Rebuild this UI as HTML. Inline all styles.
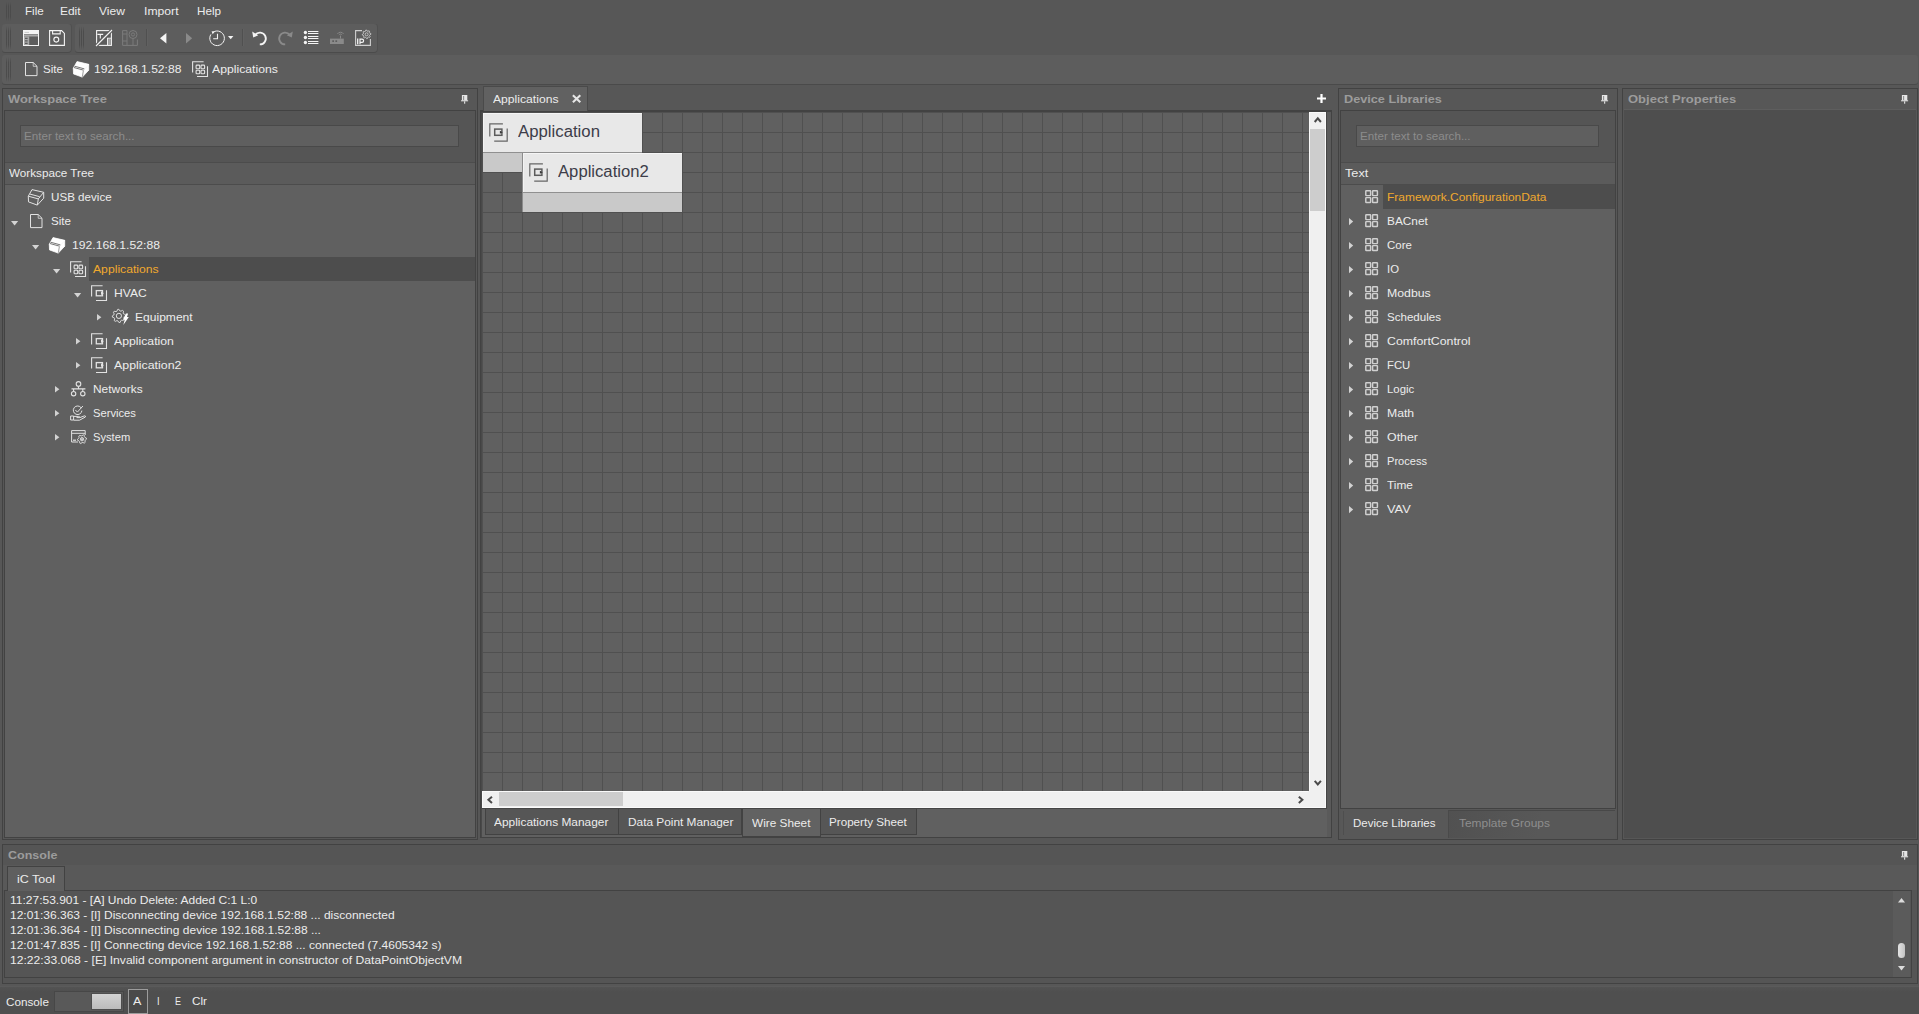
<!DOCTYPE html>
<html>
<head>
<meta charset="utf-8">
<title>iC Tool</title>
<style>
*{box-sizing:border-box;margin:0;padding:0}
html,body{width:1919px;height:1014px;overflow:hidden;background:#575757}
body{font-family:"Liberation Sans",sans-serif;font-size:11px;color:#ececec;position:relative}
.a{position:absolute}
.t{position:absolute;white-space:nowrap;line-height:14px;height:14px;transform-origin:0 50%;display:block}
svg{position:absolute;overflow:visible}
</style>
</head>
<body>
<div class="a" style="left:6px;top:2px;width:1px;height:19px;background:linear-gradient(to bottom,rgba(74,74,74,0),rgba(74,74,74,0.9) 22%,rgba(74,74,74,0.9) 78%,rgba(74,74,74,0))"></div><div class="a" style="left:8px;top:2px;width:1px;height:19px;background:linear-gradient(to bottom,rgba(74,74,74,0),rgba(74,74,74,0.9) 22%,rgba(74,74,74,0.9) 78%,rgba(74,74,74,0))"></div><div class="a" style="left:10px;top:2px;width:1px;height:19px;background:linear-gradient(to bottom,rgba(74,74,74,0),rgba(74,74,74,0.9) 22%,rgba(74,74,74,0.9) 78%,rgba(74,74,74,0))"></div>
<span class="t" style="left:24.80px;top:4.12px;font-size:11.2px;transform:scaleX(1.0362)">File</span>
<span class="t" style="left:60.00px;top:4.12px;font-size:11.2px;transform:scaleX(1.0674)">Edit</span>
<span class="t" style="left:99.10px;top:4.12px;font-size:11.2px;transform:scaleX(1.0759)">View</span>
<span class="t" style="left:143.50px;top:4.12px;font-size:11.2px;transform:scaleX(1.0901)">Import</span>
<span class="t" style="left:196.50px;top:4.12px;font-size:11.2px;transform:scaleX(1.0463)">Help</span>
<div class="a" style="left:2px;top:24px;width:69px;height:28px;background:#5d5d5d;border-radius:3px;box-shadow:0 1px 0 #4b4b4b, 1px 0 0 #505050"></div>
<div class="a" style="left:6px;top:26px;width:1px;height:24px;background:linear-gradient(to bottom,rgba(74,74,74,0),rgba(74,74,74,0.9) 22%,rgba(74,74,74,0.9) 78%,rgba(74,74,74,0))"></div><div class="a" style="left:8px;top:26px;width:1px;height:24px;background:linear-gradient(to bottom,rgba(74,74,74,0),rgba(74,74,74,0.9) 22%,rgba(74,74,74,0.9) 78%,rgba(74,74,74,0))"></div><div class="a" style="left:10px;top:26px;width:1px;height:24px;background:linear-gradient(to bottom,rgba(74,74,74,0),rgba(74,74,74,0.9) 22%,rgba(74,74,74,0.9) 78%,rgba(74,74,74,0))"></div>
<div class="a" style="left:75px;top:24px;width:302px;height:28px;background:#5d5d5d;border-radius:3px;box-shadow:0 1px 0 #4b4b4b, 1px 0 0 #505050"></div>
<div class="a" style="left:79px;top:26px;width:1px;height:24px;background:linear-gradient(to bottom,rgba(74,74,74,0),rgba(74,74,74,0.9) 22%,rgba(74,74,74,0.9) 78%,rgba(74,74,74,0))"></div><div class="a" style="left:81px;top:26px;width:1px;height:24px;background:linear-gradient(to bottom,rgba(74,74,74,0),rgba(74,74,74,0.9) 22%,rgba(74,74,74,0.9) 78%,rgba(74,74,74,0))"></div><div class="a" style="left:83px;top:26px;width:1px;height:24px;background:linear-gradient(to bottom,rgba(74,74,74,0),rgba(74,74,74,0.9) 22%,rgba(74,74,74,0.9) 78%,rgba(74,74,74,0))"></div>
<svg style="left:23px;top:30px" width="16" height="16" viewBox="0 0 16 16"><rect x="0.5" y="0.5" width="15" height="15" fill="none" stroke="#f4f4f4" stroke-width="1"/><rect x="0.5" y="0.5" width="15" height="3.8" fill="#f4f4f4"/><path d="M1.5 2.4 H6" stroke="#c9c9c9" stroke-width="1"/><path d="M1 5.8 H15" stroke="#bdbdbd" stroke-width="1.2"/><rect x="1" y="6.4" width="5.2" height="8.6" fill="#a9a9a9"/><path d="M2 8.3 H4.6 M2 10.8 H4.6 M2 13.3 H4.6" stroke="#5a5a5a" stroke-width="1.3"/></svg>
<svg style="left:49px;top:30px" width="16" height="16" viewBox="0 0 16 16"><path d="M0.6 0.6 H12.6 L15.4 3.4 V15.4 H0.6 Z" fill="none" stroke="#f4f4f4" stroke-width="1.1"/><path d="M3.6 0.8 V3.9 H11.2 V0.8" fill="none" stroke="#f4f4f4" stroke-width="1.1"/><circle cx="7.3" cy="9.6" r="2.45" fill="none" stroke="#f4f4f4" stroke-width="1.15"/></svg>
<svg style="left:96px;top:30px" width="16" height="16" viewBox="0 0 16 16"><rect x="0.6" y="0.6" width="14.8" height="14.8" fill="none" stroke="#f4f4f4" stroke-width="1.1"/><path d="M0 16 L16 0" stroke="#5d5d5d" stroke-width="3.4"/><path d="M0 16 L16 0" stroke="#f4f4f4" stroke-width="1.1"/><path d="M1.4 4.4 H7.2 M4.3 4.4 V8.6" stroke="#f4f4f4" stroke-width="1.1" fill="none"/><path d="M11.6 15 V8.2 H15" stroke="#f4f4f4" stroke-width="1.1" fill="none"/><rect x="12.2" y="8.8" width="2.6" height="6.2" fill="#a5a5a5"/></svg>
<svg style="left:122px;top:30px" width="16" height="16" viewBox="0 0 16 16"><g fill="none" stroke="#7b7b7b" stroke-width="1"><path d="M0.6 0.6 H5 V15.4 H0.6 Z"/><path d="M0.6 4 H5 M0.6 11 H5"/><circle cx="11" cy="4.5" r="4"/><circle cx="11" cy="4.5" r="1.6"/><path d="M5 15.4 H15.4 V9.5 M11 8.5 V15.4"/></g></svg>
<div class="a" style="left:146px;top:29px;width:1px;height:17px;background:#505050"></div>
<div class="a" style="left:147px;top:29px;width:1px;height:17px;background:#616161"></div>
<div class="a" style="left:242px;top:29px;width:1px;height:17px;background:#505050"></div>
<div class="a" style="left:243px;top:29px;width:1px;height:17px;background:#616161"></div>
<svg style="left:160px;top:33px" width="7" height="11" viewBox="0 0 7 11"><path d="M6.4 0 V10.4 L0 5.2 Z" fill="#f4f4f4"/></svg>
<svg style="left:186px;top:33px" width="7" height="11" viewBox="0 0 7 11"><path d="M0 0 V10.4 L6.2 5.2 Z" fill="#8a8a8a"/></svg>
<svg style="left:209px;top:30px" width="16" height="17" viewBox="0 0 16 17"><path d="M4.2 2.1 A7.3 7.3 0 1 1 1.9 4.4" fill="none" stroke="#f4f4f4" stroke-width="1"/><path d="M2.6 1.2 L6 1.6 L3.6 4.2 Z" fill="#f4f4f4"/><path d="M8.5 3.8 V8.7 H4.2" fill="none" stroke="#f4f4f4" stroke-width="1.1"/></svg>
<svg style="left:228px;top:36px" width="6" height="4" viewBox="0 0 6 4"><path d="M0 0 H5.4 L2.7 3.2 Z" fill="#f4f4f4"/></svg>
<svg style="left:251.5px;top:31px" width="15" height="15" viewBox="0 0 15 15"><path d="M3.2 3.9 A5.9 5.9 0 1 1 7.8 13.4" fill="none" stroke="#f4f4f4" stroke-width="1.9"/><path d="M0.2 0.6 L1.2 6.6 L6.2 4.2 Z" fill="#f4f4f4"/></svg>
<svg style="left:277.5px;top:31px;transform:scaleX(-1)" width="15" height="15" viewBox="0 0 15 15"><path d="M3.2 3.9 A5.9 5.9 0 1 1 7.8 13.4" fill="none" stroke="#8a8a8a" stroke-width="1.9"/><path d="M0.2 0.6 L1.2 6.6 L6.2 4.2 Z" fill="#8a8a8a"/></svg>
<svg style="left:0px;top:0px" width="400" height="60" viewBox="0 0 400 60"><circle cx="305.4" cy="32.5" r="1.65" fill="#f4f4f4"/><rect x="308" y="31" width="10.4" height="1" fill="#f4f4f4"/><rect x="308" y="33" width="10.4" height="1" fill="#f4f4f4"/><circle cx="305.4" cy="37.5" r="1.65" fill="#f4f4f4"/><rect x="308" y="36" width="10.4" height="1" fill="#f4f4f4"/><rect x="308" y="38" width="10.4" height="1" fill="#f4f4f4"/><circle cx="305.4" cy="42.5" r="1.65" fill="#f4f4f4"/><rect x="308" y="41" width="10.4" height="1" fill="#f4f4f4"/><rect x="308" y="43" width="10.4" height="1" fill="#f4f4f4"/></svg>
<svg style="left:330px;top:31px" width="14" height="14" viewBox="0 0 14 14"><rect x="0" y="7.6" width="13.8" height="5.4" fill="#8a8a8a"/><rect x="2.3" y="9.3" width="1.7" height="1.7" fill="#5d5d5d"/><rect x="5.4" y="9.3" width="1.7" height="1.7" fill="#5d5d5d"/><path d="M10.5 7.6 V4.6" stroke="#8a8a8a" stroke-width="1"/><path d="M7.4 3 A3.6 3.6 0 0 1 13.6 3" fill="none" stroke="#8a8a8a" stroke-width="0.9"/><path d="M8.9 4 A1.9 1.9 0 0 1 12.1 4" fill="none" stroke="#8a8a8a" stroke-width="0.9"/></svg>
<svg style="left:355px;top:30px" width="16" height="16" viewBox="0 0 16 16"><path d="M7 0.6 H0.6 V15.4 H15.4 V9" fill="none" stroke="#cfcfcf" stroke-width="1.1"/><path d="M15.82 3.46 L15.90 4.30 L14.74 4.92 L14.56 5.52 L15.18 6.69 L14.64 7.34 L13.38 6.96 L12.82 7.26 L12.44 8.52 L11.60 8.60 L10.98 7.44 L10.38 7.26 L9.21 7.88 L8.56 7.34 L8.94 6.08 L8.64 5.52 L7.38 5.14 L7.30 4.30 L8.46 3.68 L8.64 3.08 L8.02 1.91 L8.56 1.26 L9.82 1.64 L10.38 1.34 L10.76 0.08 L11.60 0.00 L12.22 1.16 L12.82 1.34 L13.99 0.72 L14.64 1.26 L14.26 2.52 L14.56 3.08 Z" fill="none" stroke="#d6d6d6" stroke-width="0.8"/><circle cx="11.6" cy="4.3" r="1.5" fill="none" stroke="#d6d6d6" stroke-width="0.8"/><path d="M2.7 8.6 V14.3" stroke="#f4f4f4" stroke-width="1.3"/><path d="M5 14.3 V9.1 H7 A1.6 1.6 0 0 1 7 12.3 H5" fill="none" stroke="#f4f4f4" stroke-width="1.2"/></svg>
<div class="a" style="left:2px;top:55px;width:1916px;height:29px;background:#5d5d5d;border-radius:3px;box-shadow:0 1px 0 #4a4a4a"></div>
<div class="a" style="left:6px;top:57px;width:1px;height:25px;background:linear-gradient(to bottom,rgba(74,74,74,0),rgba(74,74,74,0.9) 22%,rgba(74,74,74,0.9) 78%,rgba(74,74,74,0))"></div><div class="a" style="left:8px;top:57px;width:1px;height:25px;background:linear-gradient(to bottom,rgba(74,74,74,0),rgba(74,74,74,0.9) 22%,rgba(74,74,74,0.9) 78%,rgba(74,74,74,0))"></div><div class="a" style="left:10px;top:57px;width:1px;height:25px;background:linear-gradient(to bottom,rgba(74,74,74,0),rgba(74,74,74,0.9) 22%,rgba(74,74,74,0.9) 78%,rgba(74,74,74,0))"></div>
<svg style="left:25px;top:62px" width="13" height="15" viewBox="0 0 13 15"><path d="M0.5 0.5 H8.2 L12 4.3 V13.6 H0.5 Z" fill="none" stroke="#e2e2e2" stroke-width="1"/><path d="M8.2 0.5 V4.3 H12" fill="none" stroke="#e2e2e2" stroke-width="1" opacity="0.75"/></svg>
<span class="t" style="left:43.10px;top:62.12px;font-size:11.2px;transform:scaleX(1.0363)">Site</span>
<svg style="left:73px;top:61px" width="16" height="16" viewBox="0 0 16 16"><g fill="#ffffff" stroke="#ffffff" stroke-width="0.8" stroke-linejoin="round"><path d="M4 0.6 L15.7 3.3 L10.3 9.9 L0.3 7.2 Z"/><path d="M0.3 7.2 L0.5 12.9 L9.3 16.1 L10.3 9.9 Z"/><path d="M10.3 9.9 L9.3 16.1 L15.7 9.2 L15.7 3.3 Z"/></g><g fill="none" stroke="#5d5d5d" stroke-width="0.85"><path d="M1.5 5.2 L11.4 7.9"/><path d="M0.9 6.5 L10.7 9.2"/><path d="M10.3 9.9 L9.4 15.8" stroke-width="0.6"/></g></svg>
<span class="t" style="left:93.75px;top:62.12px;font-size:11.2px;transform:scaleX(1.0807)">192.168.1.52:88</span>
<svg style="left:192px;top:61px" width="16" height="16" viewBox="0 0 16 16"><path d="M11.6 0.7 H0.6 V11.6" fill="none" stroke="#e2e2e2" stroke-width="1.1"/><path d="M15.5 5.2 V15.5 H5" fill="none" stroke="#e2e2e2" stroke-width="1.1"/><rect x="4.1" y="4.1" width="3.6" height="3.6" rx="0.8" fill="none" stroke="#e2e2e2" stroke-width="1.1"/><rect x="9.0" y="4.1" width="3.6" height="3.6" rx="0.8" fill="none" stroke="#e2e2e2" stroke-width="1.1"/><rect x="4.1" y="9.2" width="3.6" height="3.6" rx="0.8" fill="none" stroke="#e2e2e2" stroke-width="1.1"/><rect x="9.0" y="9.2" width="3.6" height="3.6" rx="0.8" fill="none" stroke="#e2e2e2" stroke-width="1.1"/></svg>
<span class="t" style="left:212.10px;top:62.12px;font-size:11.2px;transform:scaleX(1.0929)">Applications</span>
<div class="a" style="left:2px;top:88px;width:476px;height:752px;background:#575757;border:1px solid #424242"></div><span class="t" style="left:8.30px;top:91.85px;font-size:11.4px;transform:scaleX(1.1348);font-weight:bold;color:#9c9c9c">Workspace Tree</span><svg style="left:461px;top:94.5px" width="8" height="10" viewBox="0 0 8 10"><rect x="0.9" y="0" width="5.4" height="5.6" fill="#e6e6e6"/><rect x="2.4" y="1" width="0.7" height="4.6" fill="#5a5a5a"/><rect x="0" y="5.3" width="7.1" height="1.0" fill="#e6e6e6"/><rect x="3.1" y="6.3" width="1.1" height="2.4" fill="#e6e6e6"/></svg><div class="a" style="left:4px;top:110px;width:472px;height:728px;background:#555555;border:1px solid #424242"></div><div class="a" style="left:20px;top:125px;width:439px;height:22px;background:#5f5f5f;border:1px solid #494949"></div><span class="t" style="left:24.40px;top:129.12px;font-size:11.2px;transform:scaleX(1.0399);color:#8c8c8c">Enter text to search...</span><div class="a" style="left:5px;top:162px;width:470px;height:23px;background:#5b5b5b;border-top:1px solid #4c4c4c;border-bottom:1px solid #4c4c4c"></div><span class="t" style="left:9.20px;top:166.12px;font-size:11.2px;transform:scaleX(1.0450)">Workspace Tree</span><div class="a" style="left:5px;top:185px;width:470px;height:652px;background:#606060"></div>
<svg style="left:28px;top:189px" width="16" height="16" viewBox="0 0 16 16"><g fill="none" stroke="#e2e2e2" stroke-width="1" stroke-linejoin="round"><path d="M4 0.6 L15.7 3.3 L10.3 9.9 L0.3 7.2 Z"/><path d="M0.3 7.2 L0.5 12.9 L9.3 16.1 L10.3 9.9"/><path d="M9.3 16.1 L15.7 9.2 L15.7 3.3"/><path d="M1.7 5.0 L11.6 7.7"/></g></svg><span class="t" style="left:51.25px;top:190.12px;font-size:11.2px;transform:scaleX(1.0382)">USB device</span>
<svg style="left:10.8px;top:220.6px" width="8" height="5" viewBox="0 0 8 5"><path d="M0 0 H7.2 L3.6 4.6 Z" fill="#d4d4d4"/></svg><svg style="left:30px;top:214px" width="13" height="15" viewBox="0 0 13 15"><path d="M0.5 0.5 H8.2 L12 4.3 V13.6 H0.5 Z" fill="none" stroke="#e2e2e2" stroke-width="1"/><path d="M8.2 0.5 V4.3 H12" fill="none" stroke="#e2e2e2" stroke-width="1" opacity="0.75"/></svg><span class="t" style="left:51.25px;top:214.12px;font-size:11.2px;transform:scaleX(1.0363)">Site</span>
<svg style="left:31.8px;top:244.6px" width="8" height="5" viewBox="0 0 8 5"><path d="M0 0 H7.2 L3.6 4.6 Z" fill="#d4d4d4"/></svg><svg style="left:49px;top:237px" width="16" height="16" viewBox="0 0 16 16"><g fill="#ffffff" stroke="#ffffff" stroke-width="0.8" stroke-linejoin="round"><path d="M4 0.6 L15.7 3.3 L10.3 9.9 L0.3 7.2 Z"/><path d="M0.3 7.2 L0.5 12.9 L9.3 16.1 L10.3 9.9 Z"/><path d="M10.3 9.9 L9.3 16.1 L15.7 9.2 L15.7 3.3 Z"/></g><g fill="none" stroke="#606060" stroke-width="0.85"><path d="M1.5 5.2 L11.4 7.9"/><path d="M0.9 6.5 L10.7 9.2"/><path d="M10.3 9.9 L9.4 15.8" stroke-width="0.6"/></g></svg><span class="t" style="left:72.25px;top:238.12px;font-size:11.2px;transform:scaleX(1.0869)">192.168.1.52:88</span>
<div class="a" style="left:89px;top:257px;width:386px;height:24px;background:#4d4d4d"></div><svg style="left:52.8px;top:268.6px" width="8" height="5" viewBox="0 0 8 5"><path d="M0 0 H7.2 L3.6 4.6 Z" fill="#d4d4d4"/></svg><svg style="left:70px;top:261px" width="16" height="16" viewBox="0 0 16 16"><path d="M11.6 0.7 H0.6 V11.6" fill="none" stroke="#e2e2e2" stroke-width="1.1"/><path d="M15.5 5.2 V15.5 H5" fill="none" stroke="#e2e2e2" stroke-width="1.1"/><rect x="4.1" y="4.1" width="3.6" height="3.6" rx="0.8" fill="none" stroke="#e2e2e2" stroke-width="1.1"/><rect x="9.0" y="4.1" width="3.6" height="3.6" rx="0.8" fill="none" stroke="#e2e2e2" stroke-width="1.1"/><rect x="4.1" y="9.2" width="3.6" height="3.6" rx="0.8" fill="none" stroke="#e2e2e2" stroke-width="1.1"/><rect x="9.0" y="9.2" width="3.6" height="3.6" rx="0.8" fill="none" stroke="#e2e2e2" stroke-width="1.1"/></svg><span class="t" style="left:93.25px;top:262.12px;font-size:11.2px;transform:scaleX(1.0887);color:#f0a92d">Applications</span>
<svg style="left:73.8px;top:292.6px" width="8" height="5" viewBox="0 0 8 5"><path d="M0 0 H7.2 L3.6 4.6 Z" fill="#d4d4d4"/></svg><svg style="left:91px;top:285px" width="16" height="16" viewBox="0 0 16 16"><path d="M11.6 0.7 H0.6 V11.6" fill="none" stroke="#e2e2e2" stroke-width="1.1"/><path d="M15.5 5.2 V15.5 H5" fill="none" stroke="#e2e2e2" stroke-width="1.1"/><rect x="5.3" y="5.6" width="6.2" height="5.2" fill="none" stroke="#e2e2e2" stroke-width="1.3"/><path d="M10 6.3 L12.9 8.2 L10 10.1 Z" fill="#e2e2e2"/></svg><span class="t" style="left:114.25px;top:286.12px;font-size:11.2px;transform:scaleX(1.0814)">HVAC</span>
<svg style="left:96.6px;top:313.6px" width="5" height="7" viewBox="0 0 5 7"><path d="M0 0 L4.4 3.3 L0 6.6 Z" fill="#d2d2d2"/></svg><svg style="left:112px;top:309px" width="16" height="16" viewBox="0 0 16 16"><path d="M13.37 5.61 L13.50 6.90 L11.90 7.89 L11.61 8.85 L12.39 10.57 L11.57 11.57 L9.73 11.14 L8.85 11.61 L8.19 13.37 L6.90 13.50 L5.91 11.90 L4.95 11.61 L3.23 12.39 L2.23 11.57 L2.66 9.73 L2.19 8.85 L0.43 8.19 L0.30 6.90 L1.90 5.91 L2.19 4.95 L1.41 3.23 L2.23 2.23 L4.07 2.66 L4.95 2.19 L5.61 0.43 L6.90 0.30 L7.89 1.90 L8.85 2.19 L10.57 1.41 L11.57 2.23 L11.14 4.07 L11.61 4.95 Z" fill="none" stroke="#e2e2e2" stroke-width="0.9" stroke-linejoin="round"/><circle cx="6.9" cy="6.9" r="2.6" fill="none" stroke="#e2e2e2" stroke-width="1"/><path d="M13.9 4.4 L16.1 4.4 L15 8.1 L16.8 8.1 L11.3 16 L12.7 10.8 L10.9 10.8 Z" fill="#ffffff" stroke="#606060" stroke-width="0.9" paint-order="stroke"/></svg><span class="t" style="left:135.25px;top:310.12px;font-size:11.2px;transform:scaleX(1.0785)">Equipment</span>
<svg style="left:75.6px;top:337.6px" width="5" height="7" viewBox="0 0 5 7"><path d="M0 0 L4.4 3.3 L0 6.6 Z" fill="#d2d2d2"/></svg><svg style="left:91px;top:333px" width="16" height="16" viewBox="0 0 16 16"><path d="M11.6 0.7 H0.6 V11.6" fill="none" stroke="#e2e2e2" stroke-width="1.1"/><path d="M15.5 5.2 V15.5 H5" fill="none" stroke="#e2e2e2" stroke-width="1.1"/><rect x="5.3" y="5.6" width="6.2" height="5.2" fill="none" stroke="#e2e2e2" stroke-width="1.3"/><path d="M10 6.3 L12.9 8.2 L10 10.1 Z" fill="#e2e2e2"/></svg><span class="t" style="left:114.25px;top:334.12px;font-size:11.2px;transform:scaleX(1.0951)">Application</span>
<svg style="left:75.6px;top:361.6px" width="5" height="7" viewBox="0 0 5 7"><path d="M0 0 L4.4 3.3 L0 6.6 Z" fill="#d2d2d2"/></svg><svg style="left:91px;top:357px" width="16" height="16" viewBox="0 0 16 16"><path d="M11.6 0.7 H0.6 V11.6" fill="none" stroke="#e2e2e2" stroke-width="1.1"/><path d="M15.5 5.2 V15.5 H5" fill="none" stroke="#e2e2e2" stroke-width="1.1"/><rect x="5.3" y="5.6" width="6.2" height="5.2" fill="none" stroke="#e2e2e2" stroke-width="1.3"/><path d="M10 6.3 L12.9 8.2 L10 10.1 Z" fill="#e2e2e2"/></svg><span class="t" style="left:114.25px;top:358.12px;font-size:11.2px;transform:scaleX(1.1062)">Application2</span>
<svg style="left:54.6px;top:385.6px" width="5" height="7" viewBox="0 0 5 7"><path d="M0 0 L4.4 3.3 L0 6.6 Z" fill="#d2d2d2"/></svg><svg style="left:70.6px;top:381px" width="16" height="16" viewBox="0 0 16 16"><g fill="none" stroke="#e2e2e2" stroke-width="1.1"><circle cx="7.5" cy="2.9" r="2.3"/><path d="M7.5 5.2 V7.9 M0.5 7.9 H14.4 M2.6 7.9 V10.4 M11.8 7.9 V10.4"/><circle cx="2.6" cy="12.7" r="2.2"/><circle cx="11.8" cy="12.7" r="2.2"/></g></svg><span class="t" style="left:93.25px;top:382.12px;font-size:11.2px;transform:scaleX(1.0659)">Networks</span>
<svg style="left:54.6px;top:409.6px" width="5" height="7" viewBox="0 0 5 7"><path d="M0 0 L4.4 3.3 L0 6.6 Z" fill="#d2d2d2"/></svg><svg style="left:70px;top:405px" width="16" height="16" viewBox="0 0 16 16"><g fill="none" stroke="#e2e2e2" stroke-width="1"><path d="M11.2 2.9 A4.3 4.3 0 1 0 11.9 5.6"/><path d="M5.3 4.9 L7.4 7.1 L12.9 1"/><path d="M0.6 11 H3.6 V15 H0.6 Z"/><path d="M3.6 11.4 H8.5 Q10 11.4 9.8 12.6 H6.5 M9.8 12.6 L14.6 10.8 Q15.9 10.8 15.4 12 L9.5 15.2 H3.6"/></g></svg><span class="t" style="left:93.25px;top:406.12px;font-size:11.2px;transform:scaleX(1.0012)">Services</span>
<svg style="left:54.6px;top:433.6px" width="5" height="7" viewBox="0 0 5 7"><path d="M0 0 L4.4 3.3 L0 6.6 Z" fill="#d2d2d2"/></svg><svg style="left:70.7px;top:430.4px" width="16" height="16" viewBox="0 0 16 16"><g fill="none" stroke="#e2e2e2" stroke-width="1"><path d="M7 12 H0.6 V0.6 H14.2 V5"/><path d="M0.6 3.3 H14.2"/><path d="M2 10.2 H5" stroke-width="1.2"/></g><path d="M15.35 8.04 L15.50 9.20 L14.28 10.08 L13.94 10.90 L14.18 12.38 L13.25 13.10 L11.88 12.48 L11.00 12.60 L9.84 13.55 L8.75 13.10 L8.60 11.60 L8.06 10.90 L6.65 10.36 L6.50 9.20 L7.72 8.32 L8.06 7.50 L7.82 6.02 L8.75 5.30 L10.12 5.92 L11.00 5.80 L12.16 4.85 L13.25 5.30 L13.40 6.80 L13.94 7.50 Z" fill="#606060" stroke="#e2e2e2" stroke-width="0.9" stroke-linejoin="round"/><path d="M11 7.4 V11 M9.2 9.2 H12.8" stroke="#e2e2e2" stroke-width="0.9"/><circle cx="11" cy="9.2" r="1.7" fill="none" stroke="#e2e2e2" stroke-width="0.8"/></svg><span class="t" style="left:93.25px;top:430.12px;font-size:11.2px;transform:scaleX(0.9976)">System</span>
<div class="a" style="left:1338px;top:88px;width:280px;height:752px;background:#575757;border:1px solid #424242"></div><span class="t" style="left:1344.30px;top:91.85px;font-size:11.4px;transform:scaleX(1.1126);font-weight:bold;color:#9c9c9c">Device Libraries</span><svg style="left:1601px;top:94.5px" width="8" height="10" viewBox="0 0 8 10"><rect x="0.9" y="0" width="5.4" height="5.6" fill="#e6e6e6"/><rect x="2.4" y="1" width="0.7" height="4.6" fill="#5a5a5a"/><rect x="0" y="5.3" width="7.1" height="1.0" fill="#e6e6e6"/><rect x="3.1" y="6.3" width="1.1" height="2.4" fill="#e6e6e6"/></svg><div class="a" style="left:1340px;top:110px;width:276px;height:699px;background:#555555;border:1px solid #424242"></div><div class="a" style="left:1356px;top:125px;width:243px;height:22px;background:#5f5f5f;border:1px solid #494949"></div><span class="t" style="left:1360.40px;top:129.12px;font-size:11.2px;transform:scaleX(1.0399);color:#8c8c8c">Enter text to search...</span><div class="a" style="left:1341px;top:162px;width:274px;height:23px;background:#5b5b5b;border-top:1px solid #4c4c4c;border-bottom:1px solid #4c4c4c"></div><span class="t" style="left:1345.20px;top:166.12px;font-size:11.2px;transform:scaleX(1.1343)">Text</span><div class="a" style="left:1341px;top:185px;width:274px;height:623px;background:#606060"></div>
<div class="a" style="left:1383px;top:185px;width:232px;height:24px;background:#4d4d4d"></div>
<svg style="left:1364.9px;top:190.3px" width="14" height="14" viewBox="0 0 14 14"><rect x="0.8" y="0.8" width="4.8" height="4.8" rx="0.5" fill="none" stroke="#d0d0d0" stroke-width="1.45"/><rect x="7.6" y="0.8" width="4.8" height="4.8" rx="0.5" fill="none" stroke="#d0d0d0" stroke-width="1.45"/><rect x="0.8" y="7.6" width="4.8" height="4.8" rx="0.5" fill="none" stroke="#d0d0d0" stroke-width="1.45"/><rect x="7.6" y="7.6" width="4.8" height="4.8" rx="0.5" fill="none" stroke="#d0d0d0" stroke-width="1.45"/></svg>
<span class="t" style="left:1387.40px;top:190.12px;font-size:11.2px;transform:scaleX(1.0683);color:#f0a92d">Framework.ConfigurationData</span>
<svg style="left:1349px;top:218.1px" width="5" height="8" viewBox="0 0 5 8"><path d="M0 0 L4.2 3.6 L0 7.2 Z" fill="#d2d2d2"/></svg>
<svg style="left:1364.9px;top:214.3px" width="14" height="14" viewBox="0 0 14 14"><rect x="0.8" y="0.8" width="4.8" height="4.8" rx="0.5" fill="none" stroke="#d0d0d0" stroke-width="1.45"/><rect x="7.6" y="0.8" width="4.8" height="4.8" rx="0.5" fill="none" stroke="#d0d0d0" stroke-width="1.45"/><rect x="0.8" y="7.6" width="4.8" height="4.8" rx="0.5" fill="none" stroke="#d0d0d0" stroke-width="1.45"/><rect x="7.6" y="7.6" width="4.8" height="4.8" rx="0.5" fill="none" stroke="#d0d0d0" stroke-width="1.45"/></svg>
<span class="t" style="left:1387.40px;top:214.12px;font-size:11.2px;transform:scaleX(1.0570)">BACnet</span>
<svg style="left:1349px;top:242.1px" width="5" height="8" viewBox="0 0 5 8"><path d="M0 0 L4.2 3.6 L0 7.2 Z" fill="#d2d2d2"/></svg>
<svg style="left:1364.9px;top:238.3px" width="14" height="14" viewBox="0 0 14 14"><rect x="0.8" y="0.8" width="4.8" height="4.8" rx="0.5" fill="none" stroke="#d0d0d0" stroke-width="1.45"/><rect x="7.6" y="0.8" width="4.8" height="4.8" rx="0.5" fill="none" stroke="#d0d0d0" stroke-width="1.45"/><rect x="0.8" y="7.6" width="4.8" height="4.8" rx="0.5" fill="none" stroke="#d0d0d0" stroke-width="1.45"/><rect x="7.6" y="7.6" width="4.8" height="4.8" rx="0.5" fill="none" stroke="#d0d0d0" stroke-width="1.45"/></svg>
<span class="t" style="left:1387.40px;top:238.12px;font-size:11.2px;transform:scaleX(1.0257)">Core</span>
<svg style="left:1349px;top:266.1px" width="5" height="8" viewBox="0 0 5 8"><path d="M0 0 L4.2 3.6 L0 7.2 Z" fill="#d2d2d2"/></svg>
<svg style="left:1364.9px;top:262.3px" width="14" height="14" viewBox="0 0 14 14"><rect x="0.8" y="0.8" width="4.8" height="4.8" rx="0.5" fill="none" stroke="#d0d0d0" stroke-width="1.45"/><rect x="7.6" y="0.8" width="4.8" height="4.8" rx="0.5" fill="none" stroke="#d0d0d0" stroke-width="1.45"/><rect x="0.8" y="7.6" width="4.8" height="4.8" rx="0.5" fill="none" stroke="#d0d0d0" stroke-width="1.45"/><rect x="7.6" y="7.6" width="4.8" height="4.8" rx="0.5" fill="none" stroke="#d0d0d0" stroke-width="1.45"/></svg>
<span class="t" style="left:1387.40px;top:262.12px;font-size:11.2px;transform:scaleX(1.0149)">IO</span>
<svg style="left:1349px;top:290.1px" width="5" height="8" viewBox="0 0 5 8"><path d="M0 0 L4.2 3.6 L0 7.2 Z" fill="#d2d2d2"/></svg>
<svg style="left:1364.9px;top:286.3px" width="14" height="14" viewBox="0 0 14 14"><rect x="0.8" y="0.8" width="4.8" height="4.8" rx="0.5" fill="none" stroke="#d0d0d0" stroke-width="1.45"/><rect x="7.6" y="0.8" width="4.8" height="4.8" rx="0.5" fill="none" stroke="#d0d0d0" stroke-width="1.45"/><rect x="0.8" y="7.6" width="4.8" height="4.8" rx="0.5" fill="none" stroke="#d0d0d0" stroke-width="1.45"/><rect x="7.6" y="7.6" width="4.8" height="4.8" rx="0.5" fill="none" stroke="#d0d0d0" stroke-width="1.45"/></svg>
<span class="t" style="left:1387.40px;top:286.12px;font-size:11.2px;transform:scaleX(1.0992)">Modbus</span>
<svg style="left:1349px;top:314.1px" width="5" height="8" viewBox="0 0 5 8"><path d="M0 0 L4.2 3.6 L0 7.2 Z" fill="#d2d2d2"/></svg>
<svg style="left:1364.9px;top:310.3px" width="14" height="14" viewBox="0 0 14 14"><rect x="0.8" y="0.8" width="4.8" height="4.8" rx="0.5" fill="none" stroke="#d0d0d0" stroke-width="1.45"/><rect x="7.6" y="0.8" width="4.8" height="4.8" rx="0.5" fill="none" stroke="#d0d0d0" stroke-width="1.45"/><rect x="0.8" y="7.6" width="4.8" height="4.8" rx="0.5" fill="none" stroke="#d0d0d0" stroke-width="1.45"/><rect x="7.6" y="7.6" width="4.8" height="4.8" rx="0.5" fill="none" stroke="#d0d0d0" stroke-width="1.45"/></svg>
<span class="t" style="left:1387.40px;top:310.12px;font-size:11.2px;transform:scaleX(1.0324)">Schedules</span>
<svg style="left:1349px;top:338.1px" width="5" height="8" viewBox="0 0 5 8"><path d="M0 0 L4.2 3.6 L0 7.2 Z" fill="#d2d2d2"/></svg>
<svg style="left:1364.9px;top:334.3px" width="14" height="14" viewBox="0 0 14 14"><rect x="0.8" y="0.8" width="4.8" height="4.8" rx="0.5" fill="none" stroke="#d0d0d0" stroke-width="1.45"/><rect x="7.6" y="0.8" width="4.8" height="4.8" rx="0.5" fill="none" stroke="#d0d0d0" stroke-width="1.45"/><rect x="0.8" y="7.6" width="4.8" height="4.8" rx="0.5" fill="none" stroke="#d0d0d0" stroke-width="1.45"/><rect x="7.6" y="7.6" width="4.8" height="4.8" rx="0.5" fill="none" stroke="#d0d0d0" stroke-width="1.45"/></svg>
<span class="t" style="left:1387.40px;top:334.12px;font-size:11.2px;transform:scaleX(1.1010)">ComfortControl</span>
<svg style="left:1349px;top:362.1px" width="5" height="8" viewBox="0 0 5 8"><path d="M0 0 L4.2 3.6 L0 7.2 Z" fill="#d2d2d2"/></svg>
<svg style="left:1364.9px;top:358.3px" width="14" height="14" viewBox="0 0 14 14"><rect x="0.8" y="0.8" width="4.8" height="4.8" rx="0.5" fill="none" stroke="#d0d0d0" stroke-width="1.45"/><rect x="7.6" y="0.8" width="4.8" height="4.8" rx="0.5" fill="none" stroke="#d0d0d0" stroke-width="1.45"/><rect x="0.8" y="7.6" width="4.8" height="4.8" rx="0.5" fill="none" stroke="#d0d0d0" stroke-width="1.45"/><rect x="7.6" y="7.6" width="4.8" height="4.8" rx="0.5" fill="none" stroke="#d0d0d0" stroke-width="1.45"/></svg>
<span class="t" style="left:1387.40px;top:358.12px;font-size:11.2px;transform:scaleX(1.0079)">FCU</span>
<svg style="left:1349px;top:386.1px" width="5" height="8" viewBox="0 0 5 8"><path d="M0 0 L4.2 3.6 L0 7.2 Z" fill="#d2d2d2"/></svg>
<svg style="left:1364.9px;top:382.3px" width="14" height="14" viewBox="0 0 14 14"><rect x="0.8" y="0.8" width="4.8" height="4.8" rx="0.5" fill="none" stroke="#d0d0d0" stroke-width="1.45"/><rect x="7.6" y="0.8" width="4.8" height="4.8" rx="0.5" fill="none" stroke="#d0d0d0" stroke-width="1.45"/><rect x="0.8" y="7.6" width="4.8" height="4.8" rx="0.5" fill="none" stroke="#d0d0d0" stroke-width="1.45"/><rect x="7.6" y="7.6" width="4.8" height="4.8" rx="0.5" fill="none" stroke="#d0d0d0" stroke-width="1.45"/></svg>
<span class="t" style="left:1387.40px;top:382.12px;font-size:11.2px;transform:scaleX(1.0159)">Logic</span>
<svg style="left:1349px;top:410.1px" width="5" height="8" viewBox="0 0 5 8"><path d="M0 0 L4.2 3.6 L0 7.2 Z" fill="#d2d2d2"/></svg>
<svg style="left:1364.9px;top:406.3px" width="14" height="14" viewBox="0 0 14 14"><rect x="0.8" y="0.8" width="4.8" height="4.8" rx="0.5" fill="none" stroke="#d0d0d0" stroke-width="1.45"/><rect x="7.6" y="0.8" width="4.8" height="4.8" rx="0.5" fill="none" stroke="#d0d0d0" stroke-width="1.45"/><rect x="0.8" y="7.6" width="4.8" height="4.8" rx="0.5" fill="none" stroke="#d0d0d0" stroke-width="1.45"/><rect x="7.6" y="7.6" width="4.8" height="4.8" rx="0.5" fill="none" stroke="#d0d0d0" stroke-width="1.45"/></svg>
<span class="t" style="left:1387.40px;top:406.12px;font-size:11.2px;transform:scaleX(1.0924)">Math</span>
<svg style="left:1349px;top:434.1px" width="5" height="8" viewBox="0 0 5 8"><path d="M0 0 L4.2 3.6 L0 7.2 Z" fill="#d2d2d2"/></svg>
<svg style="left:1364.9px;top:430.3px" width="14" height="14" viewBox="0 0 14 14"><rect x="0.8" y="0.8" width="4.8" height="4.8" rx="0.5" fill="none" stroke="#d0d0d0" stroke-width="1.45"/><rect x="7.6" y="0.8" width="4.8" height="4.8" rx="0.5" fill="none" stroke="#d0d0d0" stroke-width="1.45"/><rect x="0.8" y="7.6" width="4.8" height="4.8" rx="0.5" fill="none" stroke="#d0d0d0" stroke-width="1.45"/><rect x="7.6" y="7.6" width="4.8" height="4.8" rx="0.5" fill="none" stroke="#d0d0d0" stroke-width="1.45"/></svg>
<span class="t" style="left:1387.40px;top:430.12px;font-size:11.2px;transform:scaleX(1.1067)">Other</span>
<svg style="left:1349px;top:458.1px" width="5" height="8" viewBox="0 0 5 8"><path d="M0 0 L4.2 3.6 L0 7.2 Z" fill="#d2d2d2"/></svg>
<svg style="left:1364.9px;top:454.3px" width="14" height="14" viewBox="0 0 14 14"><rect x="0.8" y="0.8" width="4.8" height="4.8" rx="0.5" fill="none" stroke="#d0d0d0" stroke-width="1.45"/><rect x="7.6" y="0.8" width="4.8" height="4.8" rx="0.5" fill="none" stroke="#d0d0d0" stroke-width="1.45"/><rect x="0.8" y="7.6" width="4.8" height="4.8" rx="0.5" fill="none" stroke="#d0d0d0" stroke-width="1.45"/><rect x="7.6" y="7.6" width="4.8" height="4.8" rx="0.5" fill="none" stroke="#d0d0d0" stroke-width="1.45"/></svg>
<span class="t" style="left:1387.40px;top:454.12px;font-size:11.2px;transform:scaleX(0.9887)">Process</span>
<svg style="left:1349px;top:482.1px" width="5" height="8" viewBox="0 0 5 8"><path d="M0 0 L4.2 3.6 L0 7.2 Z" fill="#d2d2d2"/></svg>
<svg style="left:1364.9px;top:478.3px" width="14" height="14" viewBox="0 0 14 14"><rect x="0.8" y="0.8" width="4.8" height="4.8" rx="0.5" fill="none" stroke="#d0d0d0" stroke-width="1.45"/><rect x="7.6" y="0.8" width="4.8" height="4.8" rx="0.5" fill="none" stroke="#d0d0d0" stroke-width="1.45"/><rect x="0.8" y="7.6" width="4.8" height="4.8" rx="0.5" fill="none" stroke="#d0d0d0" stroke-width="1.45"/><rect x="7.6" y="7.6" width="4.8" height="4.8" rx="0.5" fill="none" stroke="#d0d0d0" stroke-width="1.45"/></svg>
<span class="t" style="left:1387.40px;top:478.12px;font-size:11.2px;transform:scaleX(1.0624)">Time</span>
<svg style="left:1349px;top:506.1px" width="5" height="8" viewBox="0 0 5 8"><path d="M0 0 L4.2 3.6 L0 7.2 Z" fill="#d2d2d2"/></svg>
<svg style="left:1364.9px;top:502.3px" width="14" height="14" viewBox="0 0 14 14"><rect x="0.8" y="0.8" width="4.8" height="4.8" rx="0.5" fill="none" stroke="#d0d0d0" stroke-width="1.45"/><rect x="7.6" y="0.8" width="4.8" height="4.8" rx="0.5" fill="none" stroke="#d0d0d0" stroke-width="1.45"/><rect x="0.8" y="7.6" width="4.8" height="4.8" rx="0.5" fill="none" stroke="#d0d0d0" stroke-width="1.45"/><rect x="7.6" y="7.6" width="4.8" height="4.8" rx="0.5" fill="none" stroke="#d0d0d0" stroke-width="1.45"/></svg>
<span class="t" style="left:1387.40px;top:502.12px;font-size:11.2px;transform:scaleX(1.1422)">VAV</span>
<div class="a" style="left:1341px;top:809px;width:274px;height:30px;background:#585858"></div>
<div class="a" style="left:1343px;top:811px;width:1px;height:24px;background:#4e4e4e"></div>
<div class="a" style="left:1448px;top:810px;width:167px;height:28px;background:linear-gradient(100deg,#515151,#585858 55%);border-left:1px solid #4a4a4a;border-top:1px solid #484848"></div>
<span class="t" style="left:1353.00px;top:815.62px;font-size:11.2px;transform:scaleX(1.0274)">Device Libraries</span>
<span class="t" style="left:1459.00px;top:815.62px;font-size:11.2px;transform:scaleX(1.0670);color:#8e8e8e">Template Groups</span>
<div class="a" style="left:1622px;top:88px;width:296px;height:752px;background:#575757;border:1px solid #424242"></div>
<span class="t" style="left:1628.40px;top:91.85px;font-size:11.4px;transform:scaleX(1.1407);font-weight:bold;color:#9c9c9c">Object Properties</span>
<svg style="left:1901px;top:94.5px" width="8" height="10" viewBox="0 0 8 10"><rect x="0.9" y="0" width="5.4" height="5.6" fill="#e6e6e6"/><rect x="2.4" y="1" width="0.7" height="4.6" fill="#5a5a5a"/><rect x="0" y="5.3" width="7.1" height="1.0" fill="#e6e6e6"/><rect x="3.1" y="6.3" width="1.1" height="2.4" fill="#e6e6e6"/></svg>
<div class="a" style="left:1624px;top:109px;width:292px;height:1px;background:#5e5e5e"></div>
<div class="a" style="left:1624px;top:110px;width:292px;height:728px;background:#4e4e4e"></div>
<div class="a" style="left:480px;top:110px;width:852px;height:728px;background:#606060;border:1px solid #424242;border-top:2px solid #424242;border-left:2px solid #424242"></div>
<div class="a" style="left:481px;top:112px;width:1px;height:725px;background:#494949"></div>
<div class="a" style="left:483px;top:86px;width:105px;height:25px;background:#616161;border:1px solid #4a4a4a;border-bottom:none"></div>
<span class="t" style="left:493.10px;top:91.92px;font-size:11.2px;transform:scaleX(1.0862)">Applications</span>
<svg style="left:571.9px;top:95.0px" width="9.2" height="7.6" viewBox="0 0 9.2 7.6"><path d="M0.9 0.3 L8.3 7.3 M8.3 0.3 L0.9 7.3" stroke="#e6e6e6" stroke-width="2.1" fill="none"/></svg>
<svg style="left:1317px;top:93.7px" width="9" height="9" viewBox="0 0 9 9"><path d="M4.5 0 V9 M0 4.5 H9" stroke="#ffffff" stroke-width="2.2" fill="none"/></svg>
<div class="a" style="left:482px;top:112px;width:827px;height:679px;background-color:#606060;background-image:linear-gradient(to right,#505050 1px,transparent 1px),linear-gradient(to bottom,#505050 1px,transparent 1px);background-size:20px 20px"></div>
<div class="a" style="left:483px;top:113px;width:159px;height:59px;background:#c9c9c9"></div><div class="a" style="left:483px;top:113px;width:159px;height:39px;background:#e8e8e8;border-top:1px solid #f5f5f5;border-left:1px solid #f3f3f3"></div><div class="a" style="left:483px;top:152px;width:159px;height:1px;background:#909090"></div><svg style="left:489px;top:123px" width="19" height="19" viewBox="0 0 19 19"><path d="M13.9 0.8 H0.8 V13.6" fill="none" stroke="#666666" stroke-width="1.2"/><path d="M18.2 5.6 V18.2 H5.2" fill="none" stroke="#666666" stroke-width="1.2"/><rect x="5.7" y="6.1" width="7.2" height="6.2" fill="none" stroke="#5c5c5c" stroke-width="1.5"/><path d="M10.9 7.7 L13.8 9.2 L10.9 10.7 Z" fill="#3a3a3a"/></svg><span class="t" style="left:518.40px;top:124.79px;font-size:15.6px;transform:scaleX(1.0745);color:#3d3d49">Application</span>
<div class="a" style="left:522px;top:153px;width:1px;height:59px;background:#8c8c8c"></div>
<div class="a" style="left:523px;top:153px;width:159px;height:59px;background:#c9c9c9"></div><div class="a" style="left:523px;top:153px;width:159px;height:39px;background:#e8e8e8;border-top:1px solid #f5f5f5;border-left:1px solid #f3f3f3"></div><div class="a" style="left:523px;top:192px;width:159px;height:1px;background:#909090"></div><svg style="left:529px;top:163px" width="19" height="19" viewBox="0 0 19 19"><path d="M13.9 0.8 H0.8 V13.6" fill="none" stroke="#666666" stroke-width="1.2"/><path d="M18.2 5.6 V18.2 H5.2" fill="none" stroke="#666666" stroke-width="1.2"/><rect x="5.7" y="6.1" width="7.2" height="6.2" fill="none" stroke="#5c5c5c" stroke-width="1.5"/><path d="M10.9 7.7 L13.8 9.2 L10.9 10.7 Z" fill="#3a3a3a"/></svg><span class="t" style="left:558.40px;top:164.79px;font-size:15.6px;transform:scaleX(1.0683);color:#3d3d49">Application2</span>
<div class="a" style="left:1309px;top:112px;width:17px;height:696px;background:#f0f0f0;border:1px solid #fafafa"></div>
<div class="a" style="left:482px;top:791px;width:827px;height:17px;background:#f0f0f0;border:1px solid #fafafa"></div>
<div class="a" style="left:1308px;top:791px;width:18px;height:17px;background:#f0f0f0;border-right:1px solid #fafafa;border-bottom:1px solid #fafafa"></div>
<div class="a" style="left:1310px;top:129px;width:15px;height:82px;background:#cdcdcd"></div>
<div class="a" style="left:499px;top:792px;width:124px;height:14px;background:#cdcdcd"></div>
<svg style="left:1313.6px;top:117px" width="8" height="6" viewBox="0 0 8 6"><path d="M0.7 5 L3.8 1.4 L6.9 5" stroke="#4a4a4a" stroke-width="2.0" fill="none"/></svg>
<svg style="left:1313.6px;top:780.3px" width="8" height="6" viewBox="0 0 8 6"><path d="M0.7 0.8 L3.8 4.4 L6.9 0.8" stroke="#4a4a4a" stroke-width="2.0" fill="none"/></svg>
<svg style="left:487px;top:795.8px" width="6" height="8" viewBox="0 0 6 8"><path d="M5 0.7 L1.4 3.8 L5 6.9" stroke="#4a4a4a" stroke-width="2.0" fill="none"/></svg>
<svg style="left:1297.7px;top:795.8px" width="6" height="8" viewBox="0 0 6 8"><path d="M0.8 0.7 L4.4 3.8 L0.8 6.9" stroke="#4a4a4a" stroke-width="2.0" fill="none"/></svg>
<div class="a" style="left:1327px;top:112px;width:4px;height:725px;background:#5a5a5a"></div>
<div class="a" style="left:1326px;top:112px;width:1px;height:697px;background:#454545"></div>
<div class="a" style="left:482px;top:808px;width:845px;height:1px;background:#454545"></div>
<div class="a" style="left:485px;top:809px;width:134px;height:26px;background:#565656;border:1px solid #424242;border-top:none"></div>
<div class="a" style="left:618px;top:809px;width:124px;height:26px;background:#565656;border:1px solid #424242;border-top:none"></div>
<div class="a" style="left:820px;top:809px;width:97px;height:26px;background:#565656;border:1px solid #424242;border-top:none"></div>
<div class="a" style="left:742px;top:809px;width:79px;height:28px;background:#626262;border:1px solid #424242;border-top:none"></div>
<span class="t" style="left:494.00px;top:815.12px;font-size:11.2px;transform:scaleX(1.0631)">Applications Manager</span>
<span class="t" style="left:628.00px;top:815.12px;font-size:11.2px;transform:scaleX(1.0591)">Data Point Manager</span>
<span class="t" style="left:752.00px;top:816.12px;font-size:11.2px;transform:scaleX(1.0560)">Wire Sheet</span>
<span class="t" style="left:829.30px;top:815.12px;font-size:11.2px;transform:scaleX(1.0414)">Property Sheet</span>
<div class="a" style="left:2px;top:844px;width:1916px;height:140px;background:#555555;border:1px solid #424242"></div>
<div class="a" style="left:3px;top:865px;width:1914px;height:25px;background:#595959"></div>
<span class="t" style="left:8.40px;top:848.05px;font-size:11.4px;transform:scaleX(1.0985);font-weight:bold;color:#9c9c9c">Console</span>
<svg style="left:1901px;top:850.7px" width="8" height="10" viewBox="0 0 8 10"><rect x="0.9" y="0" width="5.4" height="5.6" fill="#e6e6e6"/><rect x="2.4" y="1" width="0.7" height="4.6" fill="#5a5a5a"/><rect x="0" y="5.3" width="7.1" height="1.0" fill="#e6e6e6"/><rect x="3.1" y="6.3" width="1.1" height="2.4" fill="#e6e6e6"/></svg>
<div class="a" style="left:7px;top:866px;width:58px;height:25px;background:#5f5f5f;border:1px solid #424242;border-bottom:none"></div>
<span class="t" style="left:16.90px;top:872.12px;font-size:11.2px;transform:scaleX(1.1166)">iC Tool</span>
<div class="a" style="left:4px;top:890px;width:1908px;height:88px;background:#555555;border:1px solid #424242"></div>
<div class="a" style="left:8px;top:890px;width:56px;height:1px;background:#5f5f5f"></div>
<div class="a" style="left:1893px;top:891px;width:17px;height:86px;background:#5b5b5b"></div>
<span class="t" style="left:10.00px;top:893.12px;font-size:11.2px;transform:scaleX(1.0724)">11:27:53.901 - [A] Undo Delete: Added C:1 L:0</span>
<span class="t" style="left:10.00px;top:908.12px;font-size:11.2px;transform:scaleX(1.0716)">12:01:36.363 - [I] Disconnecting device 192.168.1.52:88 ... disconnected</span>
<span class="t" style="left:10.00px;top:923.12px;font-size:11.2px;transform:scaleX(1.0727)">12:01:36.364 - [I] Disconnecting device 192.168.1.52:88 ...</span>
<span class="t" style="left:10.00px;top:938.12px;font-size:11.2px;transform:scaleX(1.0707)">12:01:47.835 - [I] Connecting device 192.168.1.52:88 ... connected (7.4605342 s)</span>
<span class="t" style="left:10.00px;top:953.12px;font-size:11.2px;transform:scaleX(1.0832)">12:22:33.068 - [E] Invalid component argument in constructor of DataPointObjectVM</span>
<svg style="left:1898px;top:898px" width="7" height="5" viewBox="0 0 7 5"><path d="M0 4.4 L3.5 0 L7 4.4 Z" fill="#dcdcdc"/></svg>
<svg style="left:1898px;top:965.5px" width="7" height="5" viewBox="0 0 7 5"><path d="M0 0 L3.5 4.4 L7 0 Z" fill="#dcdcdc"/></svg>
<div class="a" style="left:1898px;top:943px;width:7px;height:15px;background:linear-gradient(to right,#e4e4e4,#c2c2c2);border-radius:3.5px"></div>
<div class="a" style="left:0px;top:986px;width:1919px;height:1px;background:#5a5a5a"></div>
<div class="a" style="left:0px;top:987px;width:1919px;height:27px;background:linear-gradient(to bottom,#535353,#4f4f4f 5px)"></div>
<span class="t" style="left:6.10px;top:994.82px;font-size:11.2px;transform:scaleX(1.0464)">Console</span>
<div class="a" style="left:54px;top:991px;width:70px;height:21px;background:#595959;border:1px solid #474747"></div>
<div class="a" style="left:92px;top:994px;width:29px;height:15px;background:linear-gradient(#d2d2d2,#bcbcbc);box-shadow:0 0 0 1px rgba(70,70,70,0.55)"></div>
<div class="a" style="left:128px;top:989px;width:20px;height:25px;background:#4a4a4a;border:1px solid #9c9c9c"></div>
<span class="t" style="left:132.80px;top:994.32px;font-size:11.2px;transform:scaleX(1.1244)">A</span>
<span class="t" style="left:156.50px;top:994.32px;font-size:11.2px;transform:scaleX(0.8356)">I</span>
<span class="t" style="left:174.80px;top:994.32px;font-size:11.2px;transform:scaleX(0.8032)">E</span>
<span class="t" style="left:192.20px;top:994.32px;font-size:11.2px;transform:scaleX(1.0485)">Clr</span>
</body>
</html>
